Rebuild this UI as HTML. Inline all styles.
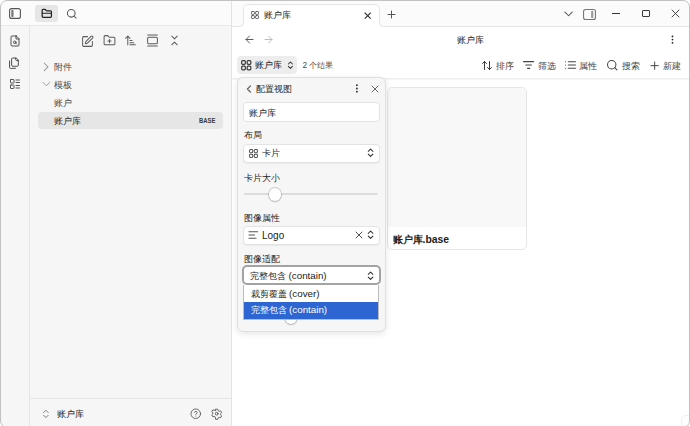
<!DOCTYPE html>
<html><head><meta charset="utf-8">
<style>
*{box-sizing:border-box;margin:0;padding:0}
html,body{width:690px;height:426px;overflow:hidden;background:#fff;font-family:"Liberation Sans",sans-serif;color:#222}
.win{position:absolute;left:0;top:0;width:690px;height:428px;border-radius:7px;overflow:hidden;background:#fff}
.frame{position:absolute;left:0;top:0;width:690px;height:428px;border:1px solid #c2c2c2;border-radius:7px;pointer-events:none;z-index:50}
.abs{position:absolute}
.t{position:absolute;white-space:nowrap;font-size:9px;line-height:12px}
svg{position:absolute;overflow:visible}
.muted{color:#4a4a4a}
.lat{font-size:9.8px}
.dot{width:1.6px;height:1.6px;border-radius:50%;background:#222}
</style></head><body>
<div class="win">
  <!-- left top header -->
  <div class="abs" style="left:0;top:0;width:232px;height:26px;background:#fbfbfb;border-bottom:1px solid #e8e8e8"></div>
  <!-- right top header -->
  <svg stroke-linecap="round" stroke-linejoin="round" fill="none" style="left:0;top:0" width="690" height="30" viewBox="0 0 690 30"><rect x="232" y="0" width="458" height="26.5" fill="#fbfbfb" stroke="none"/><path d="M239.5 27 Q243.5 27 243.5 22.5 V10 Q243.5 4.5 249 4.5 H374 Q379.5 4.5 379.5 10 V22.5 Q379.5 27 383.5 27 Z" fill="#fff" stroke="none"/><path d="M232 26.5 H239.5 Q243.5 26.5 243.5 22.5 V10 Q243.5 4.5 249 4.5 H374 Q379.5 4.5 379.5 10 V22.5 Q379.5 26.5 383.5 26.5 H690" fill="none" stroke="#e4e4e4" stroke-width="1"/></svg>
  <!-- ribbon -->
  <div class="abs" style="left:0;top:26px;width:30px;height:400px;background:#f6f6f6;border-right:1px solid #e6e6e6"></div>
  <!-- sidebar -->
  <div class="abs" style="left:30px;top:26px;width:202px;height:400px;background:#f6f6f6;border-right:1px solid #e3e3e3"></div>
  <div class="abs" style="left:231px;top:0;width:1px;height:426px;background:#e3e3e3"></div>

  <!-- sidebar toggle icon -->
  <svg stroke-linecap="round" stroke-linejoin="round" fill="none" style="left:9px;top:8px" width="12" height="11" viewBox="0 0 12 11"><rect x="0.6" y="0.6" width="10.8" height="9.8" rx="2" stroke="#555" stroke-width="1.1"/><path d="M3.4 2.8v5.4" stroke="#777" stroke-width="2.2"/></svg>
  <!-- folder button -->
  <div class="abs" style="left:35px;top:5px;width:23px;height:17px;background:#e6e6e6;border-radius:3px"></div>
  <svg stroke-linecap="round" stroke-linejoin="round" fill="none" style="left:40.8px;top:7.8px" width="11.6" height="10.2" viewBox="0 0 24 22"><path d="M20 20a2 2 0 0 0 2-2V8a2 2 0 0 0-2-2h-7.9a2 2 0 0 1-1.69-.9L9.6 3.9A2 2 0 0 0 7.93 3H4a2 2 0 0 0-2 2v13a2 2 0 0 0 2 2Z" stroke="#222" stroke-width="2.7"/><path d="M2.5 11.5h19" stroke="#222" stroke-width="2.3"/></svg>
  <!-- search -->
  <svg stroke-linecap="round" stroke-linejoin="round" fill="none" style="left:65.7px;top:8px" width="11.5" height="11.5" viewBox="0 0 24 24"><circle cx="11" cy="11" r="8" stroke="#555" stroke-width="2.2"/><path d="m21 21-4.3-4.3" stroke="#555" stroke-width="2.2"/></svg>

  <!-- ribbon icons -->
  <svg stroke-linecap="round" stroke-linejoin="round" fill="none" style="left:8.6px;top:35px" width="12" height="12" viewBox="0 0 24 24" stroke="#4a4a4a" stroke-width="1.9"><path d="M14.5 2H6a2 2 0 0 0-2 2v16a2 2 0 0 0 2 2h12a2 2 0 0 0 2-2V7.5L14.5 2z"/><path d="M14 2v6h6"/><circle cx="11.5" cy="14.5" r="2.5"/><path d="M13.3 16.3 15 18"/></svg>
  <svg stroke-linecap="round" stroke-linejoin="round" fill="none" style="left:8.3px;top:56.6px" width="12.4" height="12.4" viewBox="0 0 24 24" stroke="#4a4a4a" stroke-width="1.9"><path d="M20 7h-3a2 2 0 0 1-2-2V2"/><path d="M9 18a2 2 0 0 1-2-2V4a2 2 0 0 1 2-2h7l4 4v10a2 2 0 0 1-2 2Z"/><path d="M3 7.6v12.8A1.6 1.6 0 0 0 4.6 22h9.8"/></svg>
  <svg stroke-linecap="round" stroke-linejoin="round" fill="none" style="left:8.5px;top:78px" width="12" height="12" viewBox="0 0 24 24" stroke="#4a4a4a" stroke-width="1.9"><rect width="7" height="7" x="3" y="3" rx="1"/><rect width="7" height="7" x="3" y="14" rx="1"/><path d="M14 4h7"/><path d="M14 9h7"/><path d="M14 15h7"/><path d="M14 20h7"/></svg>

  <!-- nav buttons -->
  <svg stroke-linecap="round" stroke-linejoin="round" fill="none" style="left:81px;top:34.7px" width="13" height="13" viewBox="0 0 24 24" stroke="#5a5a5a" stroke-width="1.85"><path d="M12 3H5a2 2 0 0 0-2 2v14a2 2 0 0 0 2 2h14a2 2 0 0 0 2-2v-7"/><path d="M18.375 2.625a1 1 0 0 1 3 3l-9.013 9.014a2 2 0 0 1-.853.505l-2.873.84a.5.5 0 0 1-.62-.62l.84-2.873a2 2 0 0 1 .506-.852z"/></svg>
  <svg stroke-linecap="round" stroke-linejoin="round" fill="none" style="left:102.5px;top:34px" width="13" height="13" viewBox="0 0 24 24" stroke="#5a5a5a" stroke-width="1.85"><path d="M12 10v6"/><path d="M9 13h6"/><path d="M20 20a2 2 0 0 0 2-2V8a2 2 0 0 0-2-2h-7.9a2 2 0 0 1-1.69-.9L9.6 3.9A2 2 0 0 0 7.93 3H4a2 2 0 0 0-2 2v13a2 2 0 0 0 2 2Z"/></svg>
  <svg stroke-linecap="round" stroke-linejoin="round" fill="none" style="left:124px;top:34px" width="13" height="13" viewBox="0 0 24 24" stroke="#5a5a5a" stroke-width="1.85"><path d="m3 8 4-4 4 4"/><path d="M7 4v16"/><path d="M11 12h4"/><path d="M11 16h7"/><path d="M11 20h10"/></svg>
  <svg stroke-linecap="round" stroke-linejoin="round" fill="none" style="left:146px;top:34px" width="13" height="13" viewBox="0 0 24 24" stroke="#5a5a5a" stroke-width="1.85"><path d="M3 2h18"/><rect width="18" height="12" x="3" y="6" rx="2"/><path d="M3 22h18"/></svg>
  <svg stroke-linecap="round" stroke-linejoin="round" fill="none" style="left:167.5px;top:34px" width="13" height="13" viewBox="0 0 24 24" stroke="#5a5a5a" stroke-width="1.85"><path d="m7 20 5-5 5 5"/><path d="m7 4 5 5 5-5"/></svg>

  <!-- tree -->
  <svg stroke-linecap="round" stroke-linejoin="round" fill="none" style="left:44px;top:63px" width="4.2" height="7.6" viewBox="9 6 6 12" stroke="#999" stroke-width="1.6"><path d="m9 18 6-6-6-6"/></svg>
  <div class="t muted" style="left:53.6px;top:60.5px">附件</div>
  <svg stroke-linecap="round" stroke-linejoin="round" fill="none" style="left:43.2px;top:82.3px" width="6.8" height="4.2" viewBox="6 9 12 6" stroke="#999" stroke-width="1.7"><path d="m6 9 6 6 6-6"/></svg>
  <div class="t muted" style="left:53.6px;top:78.5px">模板</div>
  <div class="t muted" style="left:53.6px;top:96.5px">账户</div>
  <div class="abs" style="left:38px;top:112px;width:185px;height:17px;background:#e6e6e6;border-radius:4px"></div>
  <div class="t" style="left:53.6px;top:115px;color:#2a2a2a">账户库</div>
  <div class="t" style="left:198.8px;top:115px;font-size:7px;font-weight:bold;color:#3a3a3a;transform:scaleX(0.84);transform-origin:0 0">BASE</div>

  <!-- sidebar bottom -->
  <div class="abs" style="left:30px;top:398px;width:201px;height:1px;background:#e6e6e6"></div>
  <svg stroke-linecap="round" stroke-linejoin="round" fill="none" style="left:42.8px;top:409.8px" width="5.8" height="7.8" viewBox="7 3.5 10 17" stroke="#7a7a7a" stroke-width="2.1"><path d="m7 15 5 5 5-5"/><path d="m7 9 5-5 5 5"/></svg>
  <div class="t" style="left:56.5px;top:407.5px;color:#262626">账户库</div>
  <svg stroke-linecap="round" stroke-linejoin="round" fill="none" style="left:190px;top:407.5px" width="11.5" height="11.5" viewBox="0 0 24 24" stroke="#555" stroke-width="1.8"><circle cx="12" cy="12" r="10"/><path d="M9.09 9a3 3 0 0 1 5.83 1c0 2-3 3-3 3"/><path d="M12 17h.01"/></svg>
  <svg stroke-linecap="round" stroke-linejoin="round" fill="none" style="left:210.5px;top:407.6px" width="11.4" height="11.4" viewBox="0 0 24 24" stroke="#555" stroke-width="1.9"><path d="M9.7 2.6h4.6l.7 2.9 2.3 1.3 2.8-.9 2.3 4-2.2 2v2.6l2.2 2-2.3 4-2.8-.9-2.3 1.3-.7 2.9H9.7L9 18.9l-2.3-1.3-2.8.9-2.3-4 2.2-2v-2.6l-2.2-2 2.3-4 2.8.9L9 5.5z"/><circle cx="12" cy="12" r="3"/></svg>

  <!-- tab -->
  
  <svg stroke-linecap="round" stroke-linejoin="round" fill="none" style="left:251px;top:11px" width="8" height="8" viewBox="0 0 8 8" stroke="#555" stroke-width="0.95"><rect width="2.9" height="2.9" x="0.5" y="0.5" rx="0.7"/><rect width="2.9" height="2.9" x="4.6" y="0.5" rx="0.7"/><rect width="2.9" height="2.9" x="4.6" y="4.6" rx="0.7"/><rect width="2.9" height="2.9" x="0.5" y="4.6" rx="0.7"/></svg>
  <div class="t" style="left:263.5px;top:9px;color:#262626">账户库</div>
  <svg stroke-linecap="round" stroke-linejoin="round" fill="none" style="left:365.2px;top:12.6px" width="5.4" height="5.4" viewBox="6 6 12 12" stroke="#333" stroke-width="2.4"><path d="M18 6 6 18"/><path d="m6 6 12 12"/></svg>
  <svg stroke-linecap="round" stroke-linejoin="round" fill="none" style="left:388px;top:10.5px" width="7" height="7" viewBox="5 5 14 14" stroke="#555" stroke-width="2"><path d="M5 12h14"/><path d="M12 5v14"/></svg>

  <!-- window controls -->
  <svg stroke-linecap="round" stroke-linejoin="round" fill="none" style="left:564.5px;top:12px" width="7.2" height="3.9" viewBox="6 9 12 6" stroke="#555" stroke-width="1.7"><path d="m6 9 6 6 6-6"/></svg>
  <svg stroke-linecap="round" stroke-linejoin="round" fill="none" style="left:583px;top:8.5px" width="13" height="11" viewBox="0 0 13 11"><rect x="0.55" y="0.55" width="11.9" height="9.9" rx="2" stroke="#777" stroke-width="1.1"/><path d="M9.2 2.8v5.4" stroke="#9a9a9a" stroke-width="2.2"/></svg>
  <div class="abs" style="left:612px;top:13px;width:8px;height:1px;background:#333"></div>
  <div class="abs" style="left:642px;top:9.8px;width:7.5px;height:7.5px;border:1px solid #3a3a3a;border-radius:1px"></div>
  <svg stroke-linecap="round" stroke-linejoin="round" fill="none" style="left:672px;top:10px" width="7" height="7" viewBox="0 0 7 7" stroke="#333" stroke-width="0.9"><path d="M0 0 7 7M7 0 0 7"/></svg>

  <!-- view header -->
  <svg stroke-linecap="round" stroke-linejoin="round" fill="none" style="left:246px;top:36px" width="7" height="7" viewBox="5 5 14 14" stroke="#5a5a5a" stroke-width="2"><path d="m12 19-7-7 7-7"/><path d="M19 12H5"/></svg>
  <svg stroke-linecap="round" stroke-linejoin="round" fill="none" style="left:265px;top:36px" width="7" height="7" viewBox="5 5 14 14" stroke="#b5b5b5" stroke-width="1.8"><path d="M5 12h14"/><path d="m12 5 7 7-7 7"/></svg>
  <div class="t" style="left:457px;top:33.5px;color:#262626">账户库</div>
  <svg stroke-linecap="round" stroke-linejoin="round" style="left:670px;top:34px" width="6" height="12" viewBox="0 0 6 12" fill="#222" stroke="none"><circle cx="2.5" cy="2.4" r="0.9"/><circle cx="2.5" cy="5.6" r="0.9"/><circle cx="2.5" cy="8.8" r="0.9"/></svg>

  <!-- base toolbar -->
  <div class="abs" style="left:237px;top:56px;width:60px;height:18px;background:#ededed;border-radius:4px"></div>
  <svg stroke-linecap="round" stroke-linejoin="round" fill="none" style="left:240.5px;top:60px" width="10.5" height="10.5" viewBox="0 0 10.5 10.5" stroke="#3a3a3a" stroke-width="1.2"><rect width="3.7" height="3.7" x="0.65" y="0.65" rx="1"/><rect width="3.7" height="3.7" x="6.15" y="0.65" rx="1"/><rect width="3.7" height="3.7" x="6.15" y="6.15" rx="1"/><rect width="3.7" height="3.7" x="0.65" y="6.15" rx="1"/></svg>
  <div class="t" style="left:254.8px;top:59px;color:#222">账户库</div>
  <svg stroke-linecap="round" stroke-linejoin="round" fill="none" style="left:287.8px;top:62.3px" width="4.8" height="6.4" viewBox="7 4 10 16" stroke="#333" stroke-width="2.6"><path d="m7 15 5 5 5-5"/><path d="m7 9 5-5 5 5"/></svg>
  <div class="t" style="left:302.5px;top:58.6px;color:#4a4a4a;font-size:8.3px">2 个结果</div>

  <svg stroke-linecap="round" stroke-linejoin="round" fill="none" style="left:481.8px;top:61px" width="10" height="9" viewBox="2 3 20 18" stroke="#3a3a3a" stroke-width="2"><path d="m21 16-4 4-4-4"/><path d="M17 20V4"/><path d="m3 8 4-4 4 4"/><path d="M7 4v16"/></svg>
  <div class="t" style="left:495.5px;top:60px;color:#444">排序</div>
  <svg stroke-linecap="round" stroke-linejoin="round" fill="none" style="left:523.3px;top:61.2px" width="11.2" height="8" viewBox="2 5 20 14" stroke="#444" stroke-width="2"><path d="M3 6h18"/><path d="M7 12h10"/><path d="M10 18h4"/></svg>
  <div class="t" style="left:537.5px;top:60px;color:#444">筛选</div>
  <svg stroke-linecap="round" stroke-linejoin="round" fill="none" style="left:565.3px;top:61.2px" width="11" height="8" viewBox="2 5 20 14" stroke="#444" stroke-width="2"><path d="M3 12h.01"/><path d="M3 18h.01"/><path d="M3 6h.01"/><path d="M8 12h13"/><path d="M8 18h13"/><path d="M8 6h13"/></svg>
  <div class="t" style="left:579px;top:60px;color:#444">属性</div>
  <svg stroke-linecap="round" stroke-linejoin="round" fill="none" style="left:607px;top:60.3px" width="10.5" height="10.5" viewBox="2 2 20 20" stroke="#444" stroke-width="2"><circle cx="11" cy="11" r="8"/><path d="m21 21-4.3-4.3"/></svg>
  <div class="t" style="left:621.5px;top:60px;color:#444">搜索</div>
  <svg stroke-linecap="round" stroke-linejoin="round" fill="none" style="left:650.5px;top:62px" width="7.3" height="7.3" viewBox="5 5 14 14" stroke="#444" stroke-width="1.9"><path d="M5 12h14"/><path d="M12 5v14"/></svg>
  <div class="t" style="left:662.5px;top:60px;color:#444">新建</div>
  <div class="abs" style="left:232px;top:78px;width:458px;height:1px;background:#eeeeee"></div><div class="abs" style="left:232px;top:79px;width:458px;height:1px;background:#f6f6f6"></div>

  <!-- card -->
  <div class="abs" style="left:387px;top:87px;width:140px;height:163px;border:1px solid #e6e6e6;border-radius:5px;overflow:hidden;background:#fff">
    <div class="abs" style="left:0;top:0;width:138px;height:139px;background:#f8f8f8"></div>
  </div>
  <div class="t" style="left:392.5px;top:234px;font-size:10px;font-weight:bold;color:#222">账户库<span style="font-size:10.4px">.base</span></div>

  <!-- popup -->
  <div class="abs" style="left:237px;top:77px;width:149px;height:255px;background:#f6f6f6;border:1px solid #e0e0e0;border-radius:6px;box-shadow:0 2px 7px rgba(0,0,0,0.10)"></div>
  <svg stroke-linecap="round" stroke-linejoin="round" fill="none" style="left:246.8px;top:86px" width="3.8" height="6" viewBox="9 6 6 12" stroke="#666" stroke-width="2.4"><path d="m15 18-6-6 6-6"/></svg>
  <div class="t" style="left:256.3px;top:82.5px;color:#2a2a2a">配置视图</div>
  <svg stroke-linecap="round" stroke-linejoin="round" style="left:354px;top:83px" width="6" height="12" viewBox="0 0 6 12" fill="#222" stroke="none"><circle cx="2.9" cy="2.2" r="0.9"/><circle cx="2.9" cy="5.5" r="0.9"/><circle cx="2.9" cy="8.7" r="0.9"/></svg>
  <svg stroke-linecap="round" stroke-linejoin="round" fill="none" style="left:371.5px;top:85.6px" width="6" height="6" viewBox="6 6 12 12" stroke="#555" stroke-width="1.8"><path d="M18 6 6 18"/><path d="m6 6 12 12"/></svg>

  <div class="abs" style="left:243px;top:102px;width:137px;height:20px;background:#fff;border:1px solid #e3e3e3;border-radius:4px"></div>
  <div class="t" style="left:248.5px;top:107px;color:#262626">账户库</div>

  <div class="t" style="left:244px;top:129px;color:#262626">布局</div>
  <div class="abs" style="left:243px;top:144px;width:137px;height:19px;background:#fff;border:1px solid #e3e3e3;border-radius:4px;box-shadow:0 1px 1px rgba(0,0,0,0.05)"></div>
  <svg stroke-linecap="round" stroke-linejoin="round" fill="none" style="left:249.4px;top:148.6px" width="9" height="9" viewBox="0 0 9 9" stroke="#555" stroke-width="1.05"><rect width="3.2" height="3.2" x="0.55" y="0.55" rx="0.9"/><rect width="3.2" height="3.2" x="5.25" y="0.55" rx="0.9"/><rect width="3.2" height="3.2" x="5.25" y="5.25" rx="0.9"/><rect width="3.2" height="3.2" x="0.55" y="5.25" rx="0.9"/></svg>
  <div class="t" style="left:261.9px;top:146.5px;color:#2e2e2e">卡片</div>
  <svg stroke-linecap="round" stroke-linejoin="round" fill="none" style="left:368.3px;top:148.6px" width="5.2" height="7.4" viewBox="7 4 10 16" stroke="#2a2a2a" stroke-width="2.2"><path d="m7 15 5 5 5-5"/><path d="m7 9 5-5 5 5"/></svg>

  <div class="t" style="left:244px;top:172px;color:#262626">卡片大小</div>
  <div class="abs" style="left:244px;top:193px;width:134px;height:2px;background:#dcdcdc;border-radius:1px"></div>
  <div class="abs" style="left:268.5px;top:188px;width:12.5px;height:12.5px;background:#fff;border-radius:50%;box-shadow:0 0 0 0.9px rgba(0,0,0,0.16),0 1px 2px rgba(0,0,0,0.12)"></div>

  <div class="t" style="left:244px;top:212px;color:#262626">图像属性</div>
  <div class="abs" style="left:243px;top:226px;width:137px;height:19px;background:#fff;border:1px solid #e3e3e3;border-radius:4px;box-shadow:0 1px 1px rgba(0,0,0,0.05)"></div>
  <svg stroke-linecap="round" stroke-linejoin="round" fill="none" style="left:249.4px;top:231px" width="9" height="8" viewBox="0 0 9 8" stroke="#555" stroke-width="1.1" stroke-linecap="butt"><path d="M0 0.7H8.6"/><path d="M0 4H5.6"/><path d="M0 7.3H7"/></svg>
  <div class="t" style="left:262px;top:230px;color:#222;font-size:10px">Logo</div>
  <svg stroke-linecap="round" stroke-linejoin="round" fill="none" style="left:355.6px;top:232px" width="6" height="6" viewBox="6 6 12 12" stroke="#444" stroke-width="1.9"><path d="M18 6 6 18"/><path d="m6 6 12 12"/></svg>
  <svg stroke-linecap="round" stroke-linejoin="round" fill="none" style="left:368.3px;top:231px" width="5.2" height="7.4" viewBox="7 4 10 16" stroke="#2a2a2a" stroke-width="2.2"><path d="m7 15 5 5 5-5"/><path d="m7 9 5-5 5 5"/></svg>

  <div class="t" style="left:244px;top:253px;color:#262626">图像适配</div>
  <!-- second slider thumb (behind list) -->
  <div class="abs" style="left:285px;top:312px;width:12px;height:12px;background:#fff;border-radius:50%;box-shadow:0 0 0 0.9px rgba(0,0,0,0.16),0 1px 2px rgba(0,0,0,0.12)"></div>
  <div class="abs" style="left:241.5px;top:264.8px;width:139.5px;height:20.6px;background:#fff;border:2px solid #a3a3a3;border-radius:5px"></div>
  <div class="t" style="left:250px;top:270px;color:#222">完整包含 <span class="lat">(contain)</span></div>
  <svg stroke-linecap="round" stroke-linejoin="round" fill="none" style="left:368.3px;top:272px" width="5.2" height="7.4" viewBox="7 4 10 16" stroke="#2a2a2a" stroke-width="2.2"><path d="m7 15 5 5 5-5"/><path d="m7 9 5-5 5 5"/></svg>
  <!-- native list -->
  <div class="abs" style="left:243px;top:285px;width:136px;height:35px;background:#fff;border:1px solid #bdbdbd;border-top:none"></div>
  <div class="t" style="left:250.5px;top:288px;color:#222">裁剪覆盖 <span class="lat">(cover)</span></div>
  <div class="abs" style="left:244px;top:302px;width:134px;height:17px;background:#2d66d2"></div>
  <div class="t" style="left:250.5px;top:304px;color:#fff">完整包含 <span class="lat">(contain)</span></div>
</div>
<div class="abs" style="left:681px;top:415px;width:14px;height:20px;border:1px solid #f0f0f0;border-radius:5px;background:#fdfdfd"></div>
<div class="frame"></div>
</body></html>
